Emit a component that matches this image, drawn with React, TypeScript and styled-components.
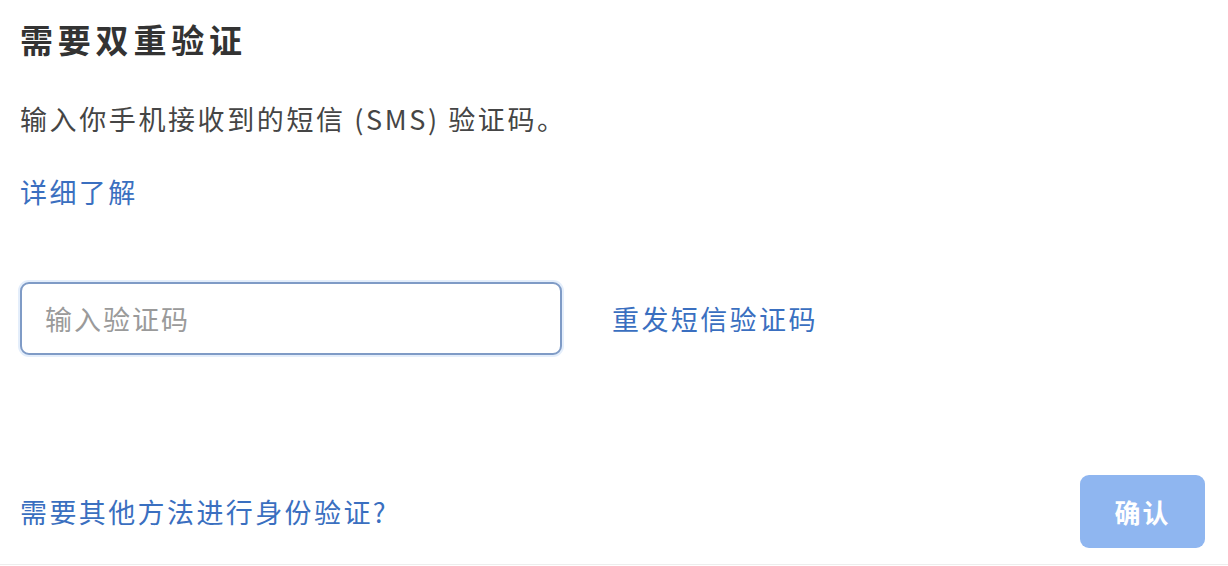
import React from "react";
import styled, { createGlobalStyle } from "styled-components";

const GlobalStyle = createGlobalStyle`
    html, body {
        margin: 0;
        padding: 0;
        background: #fff;
    }
    body {
        font-family: "Noto Sans CJK SC", "Noto Sans", "Liberation Sans", sans-serif;
    }
`

export const Page = styled.div`
    box-sizing: border-box;
    width: 1228px;
    height: 565px;
    padding: 19px 23px 0 20px;
    display: flex;
    flex-direction: column;
    border-bottom: 1px solid #ededed;
`
export const Title = styled.h1`
    margin: 0;
    font-size: 33px;
    line-height: 40px;
    font-weight: 700;
    letter-spacing: 4.8px;
    color: #333;
`
export const Text = styled.p`
    margin: 44px 0 0;
    font-size: 27px;
    line-height: 32px;
    letter-spacing: 2.6px;
    color: #454545;
`
export const Link = styled.a<{ top?: number }>`
    display: block;
    margin-top: ${props => props.top ?? 0}px;
    font-size: 27px;
    line-height: 32px;
    letter-spacing: 2.4px;
    color: #3a6fc0;
    text-decoration: none;
    cursor: pointer;
`
export const CodeRow = styled.div`
    margin-top: 74px;
    display: flex;
    align-items: center;
    gap: 50px;
`
export const CodeInput = styled.input`
    box-sizing: border-box;
    width: 542px;
    height: 73px;
    padding: 0 0 0 23px;
    border: 2px solid #7f9bc6;
    border-radius: 9px;
    box-shadow: 0 0 0 2px #e4eefb;
    outline: none;
    font-family: inherit;
    font-size: 27px;
    letter-spacing: 2px;
    color: #333;

    &::placeholder {
        color: #9a9a9a;
    }
`
export const Footer = styled.div`
    margin-top: auto;
    margin-bottom: 16px;
    display: flex;
    align-items: center;
    justify-content: space-between;
`
export const ConfirmButton = styled.button`
    width: 125px;
    height: 73px;
    border: none;
    border-radius: 9px;
    background-color: #8fb6f0;
    color: #fff;
    font-family: inherit;
    font-size: 26px;
    font-weight: 700;
    letter-spacing: 2px;
    cursor: not-allowed;
`

export default function App() {
    return (
        <>
            <GlobalStyle />
            <Page>
                <Title>需要双重验证</Title>
                <Text>输入你手机接收到的短信 (SMS) 验证码。</Text>
                <Link top={41}>详细了解</Link>
                <CodeRow>
                    <CodeInput placeholder="输入验证码" />
                    <Link>重发短信验证码</Link>
                </CodeRow>
                <Footer>
                    <Link>需要其他方法进行身份验证?</Link>
                    <ConfirmButton disabled>确认</ConfirmButton>
                </Footer>
            </Page>
        </>
    );
}
